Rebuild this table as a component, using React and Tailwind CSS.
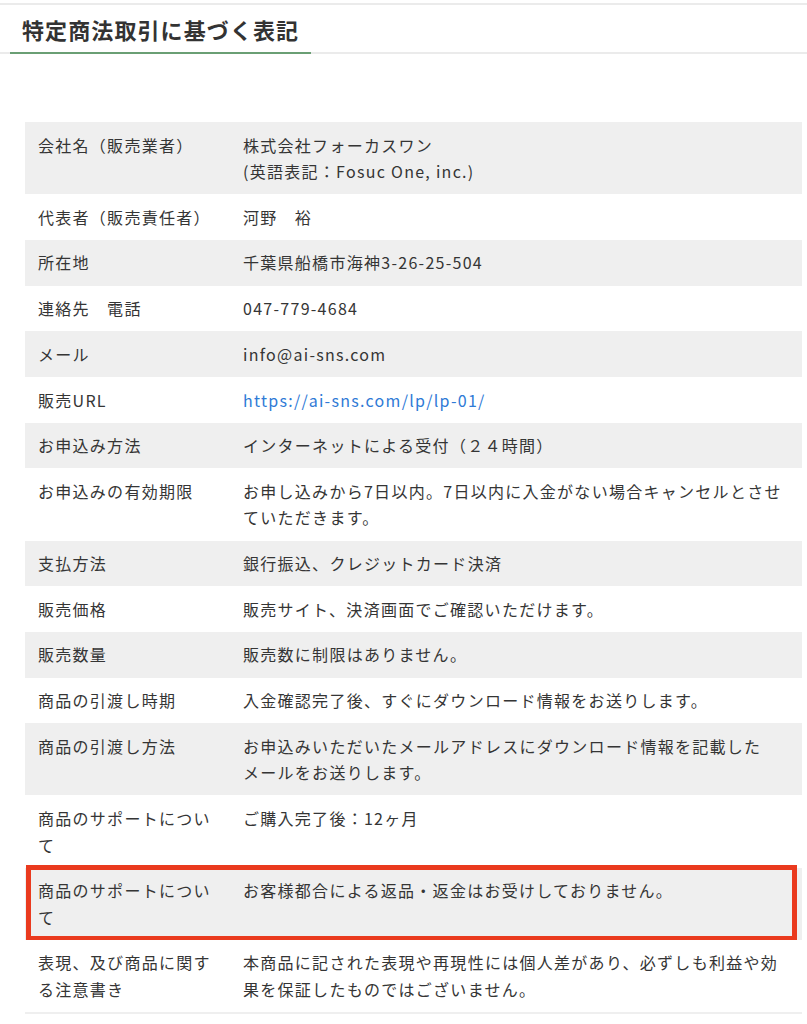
import React from "react";

const rows = [
  { label: "会社名（販売業者）", value: ["株式会社フォーカスワン", "(英語表記：Fosuc One, inc.)"] },
  { label: "代表者（販売責任者）", value: ["河野　裕"] },
  { label: "所在地", value: ["千葉県船橋市海神3-26-25-504"] },
  { label: "連絡先　電話", value: ["047-779-4684"] },
  { label: "メール", value: ["info@ai-sns.com"] },
  { label: "販売URL", value: ["https://ai-sns.com/lp/lp-01/"], link: true },
  { label: "お申込み方法", value: ["インターネットによる受付（２４時間）"] },
  { label: "お申込みの有効期限", value: ["お申し込みから7日以内。7日以内に入金がない場合キャンセルとさせていただきます。"] },
  { label: "支払方法", value: ["銀行振込、クレジットカード決済"] },
  { label: "販売価格", value: ["販売サイト、決済画面でご確認いただけます。"] },
  { label: "販売数量", value: ["販売数に制限はありません。"] },
  { label: "商品の引渡し時期", value: ["入金確認完了後、すぐにダウンロード情報をお送りします。"] },
  { label: "商品の引渡し方法", value: ["お申込みいただいたメールアドレスにダウンロード情報を記載したメールをお送りします。"] },
  { label: "商品のサポートについて", value: ["ご購入完了後：12ヶ月"] },
  { label: "商品のサポートについて", value: ["お客様都合による返品・返金はお受けしておりません。"], marked: true },
  { label: "表現、及び商品に関する注意書き", value: ["本商品に記された表現や再現性には個人差があり、必ずしも利益や効果を保証したものではございません。"] },
];

export default function App() {
  return (
    <div
      lang="ja"
      className="bg-white text-[#353535] min-h-[1024px]"
      style={{ fontFamily: '"Noto Sans CJK JP", "Noto Sans", sans-serif' }}
    >
      {/* 見出し */}
      <div className="mt-[3px] border-t-2 border-[#ebebeb] border-b-2 border-b-[#ebebeb] pl-[10px]">
        <h2 className="w-[301px] -mb-[2px] border-b-2 border-[#6a9f74] pl-[12px] pt-[9px] pb-[8px] text-[22px] leading-[30px] font-bold tracking-[0.05em] text-[#333]">
          特定商法取引に基づく表記
        </h2>
      </div>

      {/* 表 */}
      <div className="ml-[25px] mt-[68px] w-[777px] border-b-2 border-[#efefef]">
        {rows.map((row, i) => (
          <div
            key={i}
            className={`relative flex text-[16px] leading-[26.5px] tracking-[0.08em] [line-break:strict] ${
              i % 2 === 0 ? "bg-[#efefef]" : "bg-white"
            }`}
          >
            <div className="w-[205px] shrink-0 px-[13px] py-[9.6px]">{row.label}</div>
            <div className="flex-1 pl-[13px] pr-[10px] py-[9.6px]">
              {row.value.map((v, j) =>
                row.link ? (
                  <a key={j} href="#" className="text-[#2f7ad6]">
                    {v}
                  </a>
                ) : (
                  <div key={j}>{v}</div>
                )
              )}
            </div>
            {row.marked && (
              <div className="absolute -top-[3px] left-[1px] right-[5px] -bottom-[1px] border-[5px] border-[#ea3a1e] pointer-events-none" />
            )}
          </div>
        ))}
      </div>
    </div>
  );
}
